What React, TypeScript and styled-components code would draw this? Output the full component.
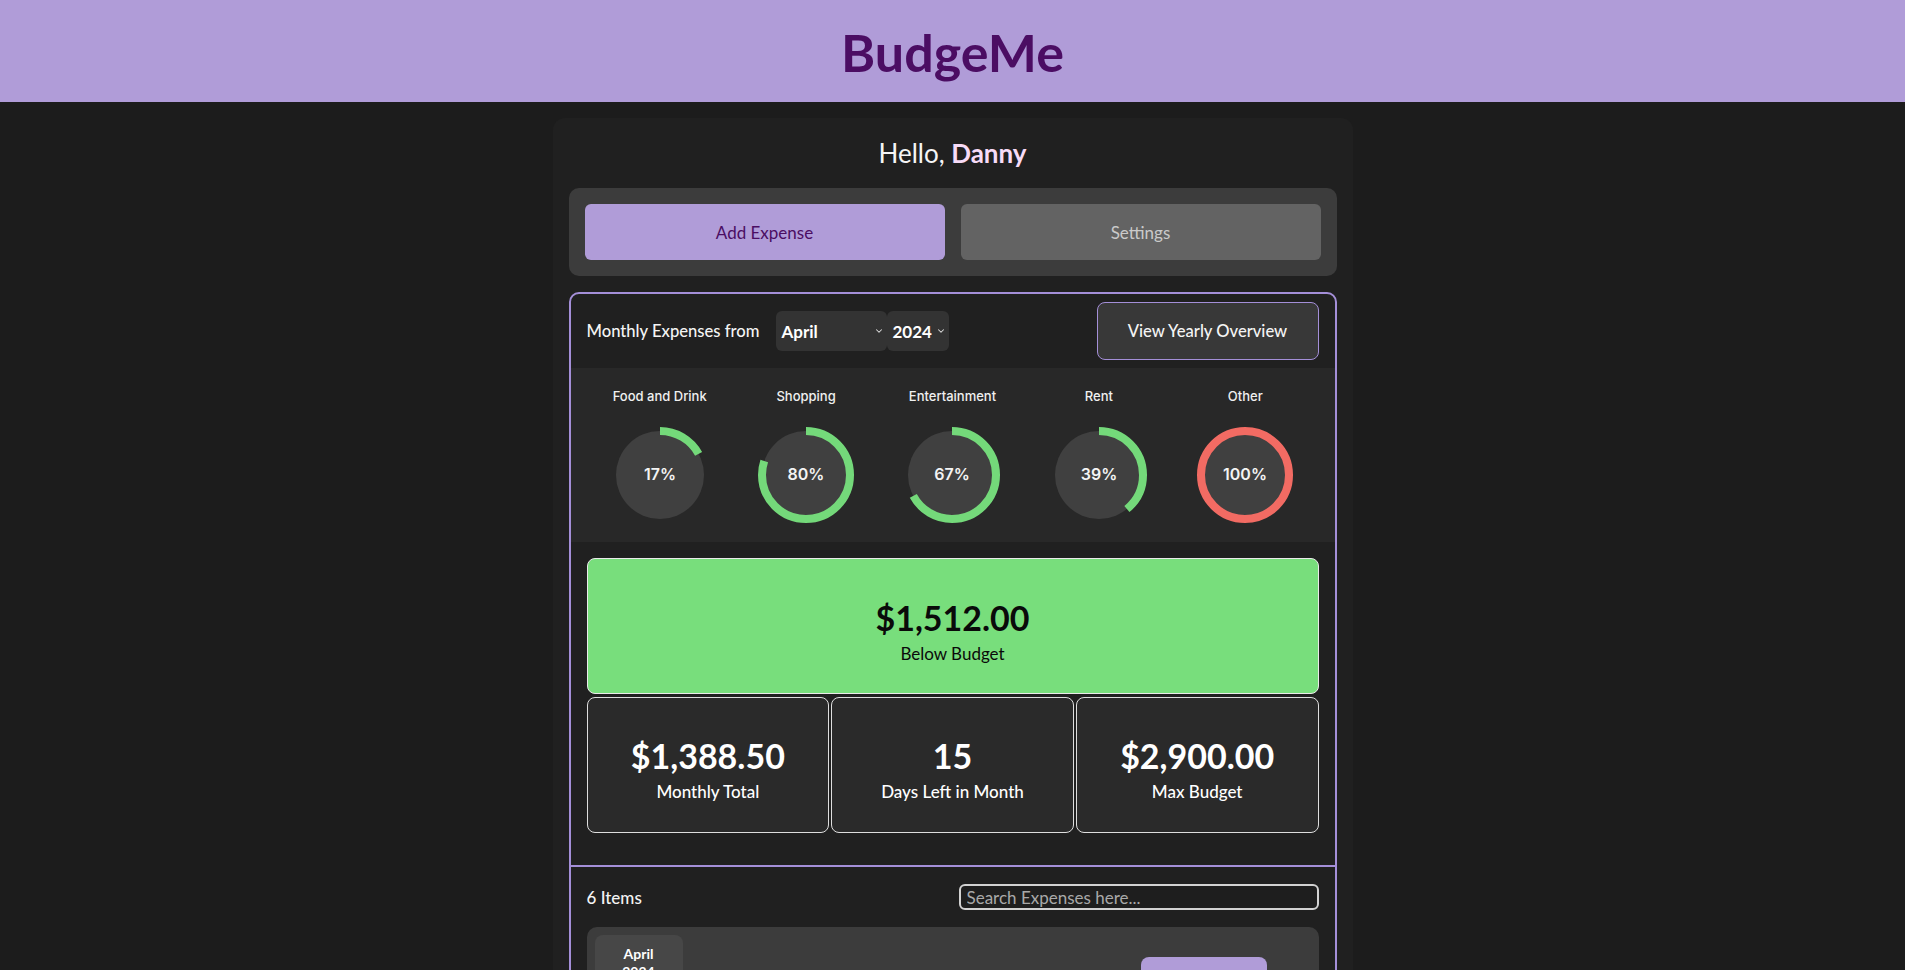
import React, { useState } from "react";
import styled, { createGlobalStyle, css } from "styled-components";
import { ChevronDown, Trash2 } from "lucide-react";

const GlobalStyle = createGlobalStyle`
  * { box-sizing: border-box; }
  body {
    margin: 0;
    background: #1c1c1c;
    color: #f2f2f2;
    font-family: Lato, "Noto Sans", sans-serif;
  }
`;

const TopBar = styled.header`
  height: 102px;
  background: #b09cd8;
  display: flex;
  align-items: center;
  justify-content: center;
`;

const Brand = styled.h1`
  margin: 0;
  padding-top: 2px;
  font-size: 52px;
  font-weight: 700;
  color: #4b0d63;
`;

const Card = styled.main`
  width: 800px;
  margin: 16px auto 40px;
  padding: 16px;
  background: #202020;
  border-radius: 12px;
`;

const Greeting = styled.h2`
  margin: 0 0 16px;
  text-align: center;
  font-size: 26px;
  line-height: 38px;
  font-weight: 400;
  color: #f5f5f5;
  span {
    font-weight: 700;
    color: #f7dbf7;
  }
`;

const ActionPanel = styled.div`
  display: grid;
  grid-template-columns: 1fr 1fr;
  gap: 16px;
  padding: 16px;
  margin-bottom: 16px;
  background: #3c3c3c;
  border-radius: 10px;
`;

const ActionButton = styled.button<{ $active?: boolean }>`
  height: 56px;
  border: none;
  border-radius: 6px;
  font-family: Lato, sans-serif;
  font-size: 17px;
  cursor: pointer;
  background: #636363;
  color: #cacaca;
  ${p => p.$active && css`
    background: #b09cd8;
    color: #4b0d63;
  `}
`;

const Overview = styled.section`
  border: 2px solid #a48fd8;
  border-radius: 10px;
  overflow: hidden;
`;

const MonthBar = styled.div`
  display: flex;
  align-items: center;
  padding: 8px 16px;
`;

const MonthTitle = styled.span`
  font-size: 16.6px;
  font-weight: 500;
  color: #f4f4f4;
  margin-right: 17px;
`;

const SelectBox = styled.div<{ $w: number }>`
  position: relative;
  width: ${p => p.$w}px;
  height: 40px;
  background: #333333;
  border-radius: 6px;
`;

const Select = styled.select`
  appearance: none;
  width: 100%;
  height: 100%;
  padding: 0 14px 0 5px;
  background: transparent;
  border: none;
  outline: none;
  color: #ffffff;
  font-family: Lato, sans-serif;
  font-size: 17px;
  font-weight: 700;
`;

const Chevron = styled(ChevronDown)`
  position: absolute;
  right: 3px;
  top: 50%;
  transform: translateY(-50%);
  pointer-events: none;
  color: #e0e0e0;
`;

const YearlyButton = styled.button`
  margin-left: auto;
  width: 222px;
  height: 58px;
  background: #383838;
  border: 1px solid #a48fd8;
  border-radius: 8px;
  color: #f4f4f4;
  font-family: Lato, sans-serif;
  font-size: 16.6px;
  font-weight: 500;
  cursor: pointer;
`;

const CategoryGrid = styled.div`
  display: grid;
  grid-template-columns: repeat(5, 1fr);
  padding: 19px 16px 19px;
  background: #282828;
`;

const Category = styled.div`
  display: flex;
  flex-direction: column;
  align-items: center;
  gap: 22px;
`;

const CategoryName = styled.span`
  font-family: Inter, sans-serif;
  font-size: 13px;
  line-height: 18px;
  font-weight: 500;
  color: #f0f0f0;
`;

const RingText = styled.text`
  font-family: Inter, sans-serif;
  font-size: 16px;
  font-weight: 600;
  fill: #f4f4f4;
`;

const Summary = styled.div`
  padding: 16px 16px 32px;
`;

const StatBox = styled.div<{ $hero?: boolean }>`
  height: 136px;
  padding-top: 7px;
  display: flex;
  flex-direction: column;
  align-items: center;
  justify-content: center;
  gap: 4px;
  border: 1px solid #dedede;
  border-radius: 8px;
  background: #2a2a2a;
  color: #ffffff;
  ${p => p.$hero && css`
    padding-top: 10px;
    background: #78de7c;
    border-color: #eaeaea;
    color: #0a0a0a;
  `}
`;

const StatValue = styled.div`
  font-size: 34px;
  line-height: 42px;
  font-weight: 700;
`;

const StatLabel = styled.div<{ $hero?: boolean }>`
  font-size: 17px;
  line-height: 22px;
  font-weight: ${p => (p.$hero ? 400 : 500)};
`;

const StatRow = styled.div`
  display: grid;
  grid-template-columns: repeat(3, 1fr);
  gap: 2px;
  margin-top: 3px;
`;

const ListSection = styled.div`
  border-top: 2px solid #a48fd8;
`;

const ListHead = styled.div`
  display: flex;
  align-items: center;
  justify-content: space-between;
  padding: 17px 16px;
`;

const ItemCount = styled.span`
  font-size: 17px;
  font-weight: 500;
  color: #f4f4f4;
`;

const Search = styled.input`
  width: 360px;
  height: 26px;
  padding: 0 6px;
  background: #1e1e1e;
  border: 2px solid #d2d2d2;
  border-radius: 6px;
  color: #eeeeee;
  font-family: Lato, sans-serif;
  font-size: 17px;
  outline: none;
  &::placeholder {
    color: #a9a9a9;
  }
`;

const ItemList = styled.div`
  display: flex;
  flex-direction: column;
  gap: 12px;
  padding: 0 16px 16px;
`;

const ItemCard = styled.div`
  display: flex;
  align-items: center;
  gap: 16px;
  padding: 8px;
  background: #3c3c3c;
  border-radius: 10px;
`;

const DateBox = styled.div`
  width: 88px;
  height: 92px;
  padding-top: 10px;
  display: flex;
  flex-direction: column;
  align-items: center;
  background: #474747;
  border-radius: 8px;
  font-weight: 700;
  font-size: 14px;
  line-height: 18px;
  color: #ffffff;
`;

const DayNum = styled.span`
  font-size: 26px;
  line-height: 32px;
`;

const ItemInfo = styled.div`
  flex: 1;
  display: flex;
  align-items: center;
  gap: 12px;
  line-height: 20px;
`;

const ItemName = styled.span`
  font-size: 18px;
  font-weight: 700;
  color: #f4f4f4;
`;

const ItemCategory = styled.span`
  font-size: 14px;
  color: #bdbdbd;
`;

const ItemAmount = styled.span`
  font-size: 18px;
  line-height: 20px;
  font-weight: 700;
  color: #f4f4f4;
  margin-right: 12px;
`;

const EditButton = styled.button`
  width: 126px;
  height: 48px;
  border: none;
  border-radius: 8px;
  background: #b09cd8;
  color: #4b0d63;
  font-family: Lato, sans-serif;
  font-size: 16px;
  cursor: pointer;
`;

const DeleteButton = styled.button`
  width: 36px;
  height: 36px;
  margin-left: -8px;
  border: none;
  background: transparent;
  color: #d9d9d9;
  display: flex;
  align-items: center;
  justify-content: center;
  cursor: pointer;
`;

const RADIUS = 44;
const CIRC = 2 * Math.PI * RADIUS;

const Ring: React.FC<{ pct: number }> = ({ pct }) => {
  const over = pct >= 100;
  const color = over ? "#f26b63" : "#74d97a";
  const len = (Math.min(pct, 100) / 100) * CIRC;
  return (
    <svg width="96" height="96" viewBox="0 0 96 96">
      <circle cx="48" cy="48" r={RADIUS} fill="#404040" />
      <circle
        cx="48"
        cy="48"
        r={RADIUS}
        fill="none"
        stroke={color}
        strokeWidth="8"
        strokeDasharray={`${len} ${CIRC}`}
        transform="rotate(-90 48 48)"
      />
      <RingText x="48" y="49" textAnchor="middle" dominantBaseline="middle">
        {pct}%
      </RingText>
    </svg>
  );
};

const months = ["January", "February", "March", "April", "May", "June", "July", "August", "September", "October", "November", "December"];

const categories = [
  { name: "Food and Drink", pct: 17 },
  { name: "Shopping", pct: 80 },
  { name: "Entertainment", pct: 67 },
  { name: "Rent", pct: 39 },
  { name: "Other", pct: 100 },
];

const expenses = [
  { day: 16, name: "Groceries", category: "Food and Drink", amount: "$84.20" },
  { day: 14, name: "Concert Tickets", category: "Entertainment", amount: "$120.00" },
  { day: 10, name: "New Shoes", category: "Shopping", amount: "$96.30" },
  { day: 5, name: "Phone Bill", category: "Other", amount: "$58.00" },
  { day: 3, name: "Dinner Out", category: "Food and Drink", amount: "$30.00" },
  { day: 1, name: "Rent", category: "Rent", amount: "$1,000.00" },
];

export default function App() {
  const [month, setMonth] = useState("April");
  const [year, setYear] = useState("2024");
  const [query, setQuery] = useState("");

  return (
    <>
      <GlobalStyle />
      <TopBar>
        <Brand>BudgeMe</Brand>
      </TopBar>
      <Card>
        <Greeting>
          Hello, <span>Danny</span>
        </Greeting>
        <ActionPanel>
          <ActionButton $active>Add Expense</ActionButton>
          <ActionButton>Settings</ActionButton>
        </ActionPanel>
        <Overview>
          <MonthBar>
            <MonthTitle>Monthly Expenses from</MonthTitle>
            <SelectBox $w={111}>
              <Select value={month} onChange={e => setMonth(e.target.value)}>
                {months.map(m => (
                  <option key={m}>{m}</option>
                ))}
              </Select>
              <Chevron size={10} strokeWidth={2.5} />
            </SelectBox>
            <SelectBox $w={62}>
              <Select value={year} onChange={e => setYear(e.target.value)}>
                <option>2023</option>
                <option>2024</option>
              </Select>
              <Chevron size={10} strokeWidth={2.5} />
            </SelectBox>
            <YearlyButton>View Yearly Overview</YearlyButton>
          </MonthBar>
          <CategoryGrid>
            {categories.map(c => (
              <Category key={c.name}>
                <CategoryName>{c.name}</CategoryName>
                <Ring pct={c.pct} />
              </Category>
            ))}
          </CategoryGrid>
          <Summary>
            <StatBox $hero>
              <StatValue>$1,512.00</StatValue>
              <StatLabel $hero>Below Budget</StatLabel>
            </StatBox>
            <StatRow>
              <StatBox>
                <StatValue>$1,388.50</StatValue>
                <StatLabel>Monthly Total</StatLabel>
              </StatBox>
              <StatBox>
                <StatValue>15</StatValue>
                <StatLabel>Days Left in Month</StatLabel>
              </StatBox>
              <StatBox>
                <StatValue>$2,900.00</StatValue>
                <StatLabel>Max Budget</StatLabel>
              </StatBox>
            </StatRow>
          </Summary>
          <ListSection>
            <ListHead>
              <ItemCount>{expenses.length} Items</ItemCount>
              <Search
                placeholder="Search Expenses here..."
                value={query}
                onChange={e => setQuery(e.target.value)}
              />
            </ListHead>
            <ItemList>
              {expenses.map(x => (
                <ItemCard key={x.name}>
                  <DateBox>
                    <span>April</span>
                    <span>2024</span>
                    <DayNum>{x.day}</DayNum>
                  </DateBox>
                  <ItemInfo>
                    <ItemName>{x.name}</ItemName>
                    <ItemCategory>{x.category}</ItemCategory>
                  </ItemInfo>
                  <ItemAmount>{x.amount}</ItemAmount>
                  <EditButton>Edit</EditButton>
                  <DeleteButton>
                    <Trash2 size={20} />
                  </DeleteButton>
                </ItemCard>
              ))}
            </ItemList>
          </ListSection>
        </Overview>
      </Card>
    </>
  );
}
